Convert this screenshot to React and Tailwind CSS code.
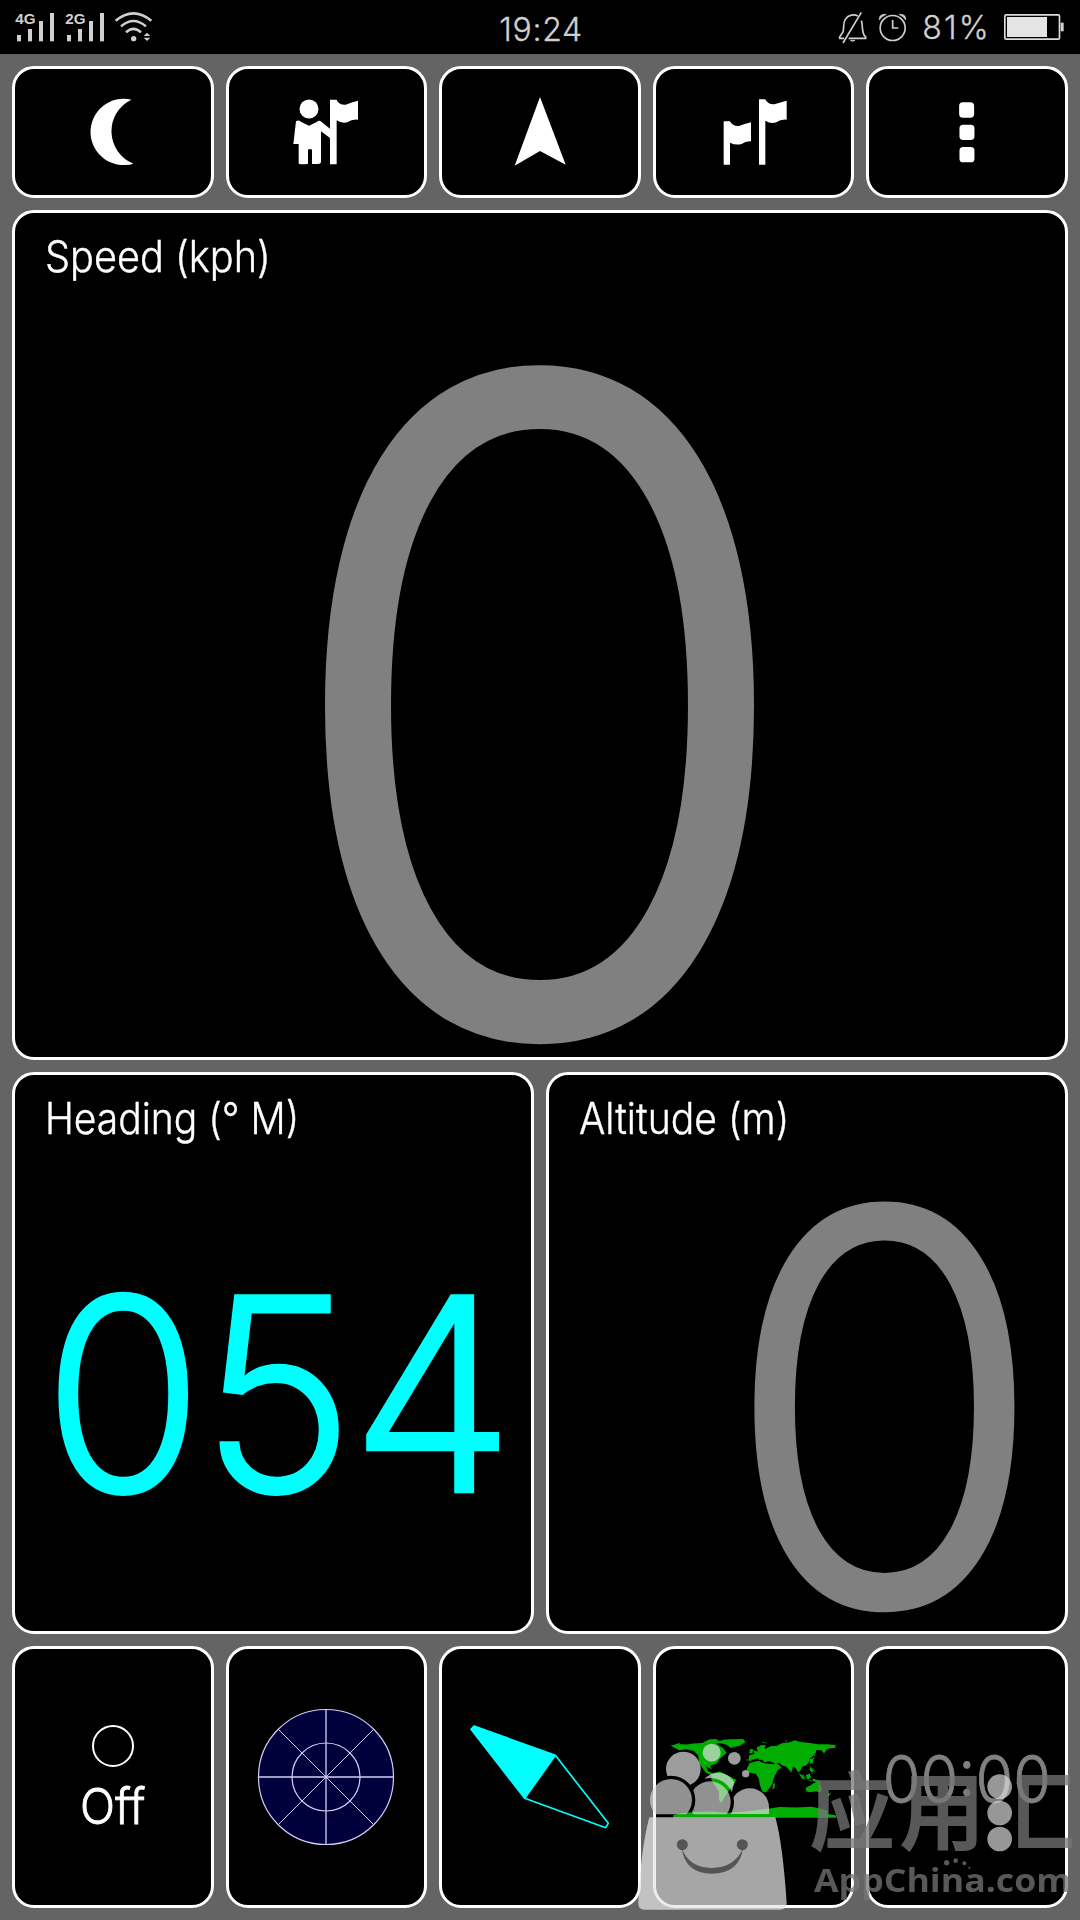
const CARD = "rounded-[22px] border-[3px] border-white bg-black";

function SignalIcons() {
  return (
    <svg className="h-[34px] w-[140px]" viewBox="45 30 420 102" fill="#cfcfcf">
      <text x="46" y="71" fontSize="42" fontFamily="Liberation Sans" fontWeight="700" textLength="61" lengthAdjust="spacingAndGlyphs">4G</text>
      <rect x="51" y="105" width="12" height="19" />
      <rect x="84" y="87" width="12" height="37" />
      <rect x="117" y="63" width="12" height="61" />
      <rect x="150" y="39" width="12" height="85" />
      <text x="196" y="71" fontSize="42" fontFamily="Liberation Sans" fontWeight="700" textLength="61" lengthAdjust="spacingAndGlyphs">2G</text>
      <rect x="201" y="105" width="12" height="19" />
      <rect x="234" y="87" width="12" height="37" />
      <rect x="267" y="63" width="12" height="61" />
      <rect x="300" y="39" width="12" height="85" />
      <g fill="none" stroke="#cfcfcf" strokeWidth="7.500">
        <path d="M347 62Q400 18 454 62" />
        <path d="M363 79Q400 47 438 79" />
        <path d="M378 97Q400 76 423 97" />
      </g>
      <circle cx="401" cy="116" r="8" />
      <path d="M431 108L441 98L451 108ZM431 113L441 123L451 113Z" />
    </svg>
  );
}

function AlertIcons() {
  return (
    <svg className="h-[34px] w-[69px]" viewBox="355 30 207 102" fill="none" stroke="#cfcfcf" strokeWidth="5">
      <path d="M414 48C404 42 386 44 377 58C369 70 374 84 370 96L360 111V115H373M387 115H438V111C424 100 431 78 425 62" />
      <path d="M370 129L425 37" />
      <path d="M392 121H406Q399 127 392 121Z" fill="#cfcfcf" strokeWidth="2" />
      <circle cx="519" cy="84" r="37.500" />
      <path d="M519 60V84H536" />
      <path d="M479 60Q476 42 500 43Q486 49 479 60ZM558 60Q561 42 538 43Q551 49 558 60Z" fill="#cfcfcf" strokeWidth="2" />
    </svg>
  );
}

function Battery() {
  return (
    <svg className="h-[28px] w-[60px]" viewBox="852 39 180 84">
      <rect x="854.500" y="44.500" width="164" height="73" rx="4" fill="none" stroke="#dcdcdc" strokeWidth="5" />
      <rect x="861" y="51" width="120" height="60" fill="#e4e4e4" />
      <rect x="1022" y="68" width="9" height="26" fill="#cfcfcf" />
    </svg>
  );
}

function StatusBar() {
  return (
    <header className="grid h-[54px] grid-cols-3 items-center bg-black font-['Inter',sans-serif] text-[32px] leading-[0.75] font-light text-[#d0d0d0]">
      <div className="pl-[15px]"><SignalIcons /></div>
      <div className="pt-[5px] pl-[2px] text-center tracking-[0.700px] [-webkit-text-stroke:0.300px_#d0d0d0]">19:24</div>
      <div className="flex items-center justify-end pr-[16px]">
        <AlertIcons />
        <span className="mt-[2px] ml-[15px] tracking-[2.200px] [-webkit-text-stroke:0.300px_#d0d0d0]">81%</span>
        <span className="ml-[13px]"><Battery /></span>
      </div>
    </header>
  );
}

function ToolButton({ viewBox, label, children }) {
  return (
    <button aria-label={label} className={`${CARD} flex items-center justify-center`}>
      <svg className="size-[80px] shrink-0" viewBox={viewBox} fill="white">{children}</svg>
    </button>
  );
}

function Toolbar() {
  return (
    <nav className="grid h-[132px] grid-cols-5 gap-3">
      <ToolButton label="Night mode" viewBox="218 276 240 240">
        <path d="M393 299A99.500 99.500 0 1 0 399 491A105 105 0 0 1 393 299Z" />
      </ToolButton>
      <ToolButton label="Position" viewBox="19 36 240 240">
        <circle cx="88" cy="87" r="28.500" />
        <path d="M49 124Q58 118 65 126L88 137L111 126Q118 119 126 126L151 146V59H171Q177 75 198 74Q216 67 235 62V119Q217 117 203 127Q186 131 171 121V253H151V174L124 154V247Q123 252 115 252H97V209Q91 205 85 209V251Q70 255 57 251V192H41Z" />
      </ToolButton>
      <ToolButton label="Navigate" viewBox="660 36 240 240">
        <path d="M780 51L857 254L780 213L704 257Z" />
      </ToolButton>
      <ToolButton label="Waypoints" viewBox="461 36 240 240">
        <path d="M490 124H509Q516 139 536 138Q552 132 572 127V184Q555 183 544 192Q526 197 509 188V254H490Z" />
        <path d="M596 58H615Q622 74 642 73Q660 67 679 62V119Q662 117 648 127Q631 132 615 122V254H596Z" />
      </ToolButton>
      <ToolButton label="Menu" viewBox="621.600 276 240 240">
        <rect x="718" y="307" width="45" height="46" rx="11" />
        <rect x="719" y="374" width="45" height="46" rx="11" />
        <rect x="719" y="441" width="45" height="46" rx="11" />
      </ToolButton>
    </nav>
  );
}

function Label({ className, children }) {
  return (
    <h2 className={`mt-[22px] origin-left self-start text-[43px] leading-none font-light whitespace-nowrap text-white [-webkit-text-stroke:0.400px_white] ${className}`}>
      {children}
    </h2>
  );
}

function Radar() {
  return (
    <svg className="size-[138px]" viewBox="-69 -69 138 138" stroke="#d4ccf4" fill="none">
      <circle r="67.500" fill="#00003c" strokeWidth="1.200" />
      <circle r="34" strokeWidth="1.200" />
      <path d="M0 -67.500V67.500M-67.500 0H67.500" strokeWidth="1.300" />
      <path d="M-47.700 -47.700L47.700 47.700M-47.700 47.700L47.700 -47.700" strokeWidth="1" />
    </svg>
  );
}

function Compass() {
  return (
    <svg className="h-[106px] w-[142px]" viewBox="148 253 426 318" fill="none" stroke="#00ffff" strokeWidth="5" strokeLinejoin="round">
      <path d="M154 269L163 259L407 347L315 476Z" fill="#00ffff" />
      <path d="M407 347L566 551L558 564L315 476" />
    </svg>
  );
}

function WorldMap() {
  return (
    <svg className="h-[82px] w-[168px]" viewBox="120 110 505 245" fill="#00ad00">
      <path d="M122 138L145 133L170 135L190 132L215 130L235 124L255 126L262 134L280 146L290 160L281 168L270 178L262 190L250 196L240 199L246 211L236 205L228 201L235 215L250 222L246 229L228 219L217 205L207 188L205 168L192 154L170 149L148 152L132 144Z" />
      <path d="M222 127L240 119L258 118L268 124L285 120L306 119L340 118L347 127L332 138L312 142L302 145L292 136L270 130L252 132Z" />
      <path d="M246 221L270 216L290 226L319 241L310 257L298 272L284 292L275 311L268 303L267 276L253 255L244 241Z" />
      <path d="M356 182L358 167L374 163L370 152L384 156L380 144L395 136L408 137L404 149L424 139L440 139L456 131L480 128L495 122L512 127L540 130L565 134L596 134L618 137L617 145L600 145L591 150L583 162L575 152L560 151L556 161L548 172L540 177L537 188L529 198L517 202L512 213L506 219L498 206L490 202L484 220L475 207L467 200L457 198L449 190L440 191L456 203L443 212L437 226L430 240L428 253L418 267L407 279L397 275L390 256L387 237L377 222L358 219L350 209L359 191L376 186L390 183L384 176L371 180Z" />
      <path d="M386 184L396 180L404 188L418 185L436 191L432 194L410 192L398 190Z" fill="black" />
      <path d="M528 265L542 258L551 251L560 248L570 252L578 268L572 279L557 275L542 278L530 276ZM360 149L370 148L368 160L359 162ZM540 178L552 176L549 191L541 193ZM507 221L520 228L527 240L516 236ZM528 227L540 222L544 235L534 240ZM542 203L552 212L546 220L539 210ZM548 237L568 243L575 251L560 249L549 243ZM430 254L436 250L434 266L428 269ZM594 284L604 278L597 292ZM132 137L150 129L146 138Z" />
      <path d="M520 226L538 243L555 244M540 200L555 215L545 226M558 155L552 176L538 196M350 181L366 184M398 128L410 131M466 126L475 122" fill="none" stroke="#00ad00" strokeWidth="3" strokeDasharray="6 3" />
      <path d="M150 342L190 338L250 336L290 340L340 337L420 327L450 323L500 324L545 322L575 328L596 335L592 343L620 348V355H130V347Z" />
    </svg>
  );
}

function Watermark() {
  return (
    <div className="pointer-events-none absolute top-[1740px] left-[636px] h-[180px] w-[444px]">
      <svg className="h-[180px] w-[444px]" viewBox="18 120 1332 540">
        <defs>
          <mask id="backBalls" maskUnits="userSpaceOnUse" x="18" y="120" width="460" height="540">
            <rect x="18" y="120" width="460" height="223" fill="white" />
            <circle cx="123" cy="300" r="73" fill="black" />
            <circle cx="240" cy="306" r="72" fill="black" />
          </mask>
          <mask id="middleBall" maskUnits="userSpaceOnUse" x="18" y="120" width="460" height="540">
            <rect x="18" y="120" width="460" height="223" fill="white" />
            <circle cx="123" cy="300" r="73" fill="black" />
          </mask>
          <clipPath id="bagRim"><rect x="18" y="120" width="460" height="223" /></clipPath>
        </defs>
        <g fill="#dedede" fillOpacity=".7">
          <g mask="url(#backBalls)">
            <circle cx="160" cy="207" r="52" />
            <path d="M220 240A56 56 0 0 1 313 247L303 285Z" />
            <path d="M302 343V322A57 57 0 0 1 417 322V343Z" />
          </g>
          <circle cx="240" cy="306" r="62" mask="url(#middleBall)" fillOpacity=".65" />
          <circle cx="123" cy="300" r="63" clipPath="url(#bagRim)" fillOpacity=".65" />
          <circle cx="245" cy="158" r="27" />
          <circle cx="313" cy="175" r="19" />
          <circle cx="347" cy="221" r="11" />
        </g>
        <path d="M58 352H436Q458 430 470 608Q470 629 450 629H43Q23 629 25 606Q32 450 58 352Z" fill="#e6e6e6" fillOpacity=".72" />
        <g fill="#505050" fillOpacity=".95">
          <circle cx="157" cy="434" r="16.500" />
          <circle cx="337" cy="434" r="16.500" />
          <path d="M155 445Q178 504 245 504Q313 504 339 445Q328 521 245 521Q166 521 155 445Z" />
        </g>
        <g fill="#dedede" fillOpacity=".68">
          <circle cx="1109" cy="260" r="37" />
          <circle cx="1109" cy="339" r="37" />
          <circle cx="1109" cy="417" r="37" />
        </g>
        <g fill="#767676" fillOpacity=".75">
          <circle cx="950" cy="488" r="8" />
          <circle cx="977" cy="482" r="7" />
          <circle cx="1003" cy="490" r="6" />
          <circle cx="1018" cy="503" r="3" />
        </g>
      </svg>
      <div className="absolute top-[24px] left-[173px] flex gap-[4px] font-['Noto_Sans_CJK_SC',sans-serif] text-[86px] leading-none font-bold text-[#767676]/75">
        <span>应</span>
        <span>用</span>
        <span className="[clip-path:inset(0_0_0_27px)]">汇</span>
      </div>
      <div className="absolute top-[123px] left-[178px] origin-left scale-x-[1.080] font-['Open_Sans',sans-serif] text-[33px] leading-none font-bold text-[#767676]/75">AppChina.com</div>
    </div>
  );
}

export default function App() {
  return (
    <main className="relative flex h-[1920px] w-[1080px] flex-col overflow-hidden bg-[#646464] font-['Inter',sans-serif]">
      <StatusBar />
      <div className="flex flex-1 flex-col gap-3 p-3">
        <Toolbar />
        <section className={`${CARD} flex h-[850px] flex-col justify-between pb-[15px] pl-[30px]`}>
          <Label className="scale-x-[0.923]">Speed (kph)</Label>
          <div className="mr-[31px] origin-center scale-x-[0.957] text-center text-[897px] leading-[0.75] font-light text-[#808080] [-webkit-text-stroke:9px_#808080]">0</div>
        </section>
        <div className="grid h-[562px] grid-cols-2 gap-3">
          <section className={`${CARD} flex flex-col pl-[30px]`}>
            <Label className="scale-x-[0.907]">Heading (° M)</Label>
            <div className="mt-[153px] -ml-[2px] origin-left scale-x-[0.962] self-start text-[270px] leading-[0.75] font-light tracking-[-3.500px] text-[#00ffff] [-webkit-text-stroke:2.500px_#00ffff]">054</div>
          </section>
          <section className={`${CARD} flex flex-col justify-between pb-[21px] pl-[30px]`}>
            <Label className="scale-x-[0.910]">Altitude (m)</Label>
            <div className="mr-[20px] origin-right scale-x-[0.958] self-end text-[542px] leading-[0.75] font-light text-[#808080] [-webkit-text-stroke:6px_#808080]">0</div>
          </section>
        </div>
        <div className="grid flex-1 grid-cols-5 gap-3">
          <section className={`${CARD} flex flex-col items-center pt-[76px]`}>
            <div className="size-[42px] rounded-full border-2 border-white" />
            <div className="mt-[22px] scale-x-[0.940] text-[49px] leading-[0.75] font-light text-white [-webkit-text-stroke:0.800px_white]">Off</div>
          </section>
          <section className={`${CARD} flex items-center justify-center`}><Radar /></section>
          <section className={`${CARD} flex items-center justify-center`}><Compass /></section>
          <section className={`${CARD} flex items-center justify-center`}><WorldMap /></section>
          <section className={`${CARD} flex items-center justify-center`}>
            <div className="mt-[6px] scale-x-[0.925] text-[66px] leading-[0.75] font-light text-[#808080] [-webkit-text-stroke:0.800px_#808080]">00:00</div>
          </section>
        </div>
      </div>
      <Watermark />
    </main>
  );
}
